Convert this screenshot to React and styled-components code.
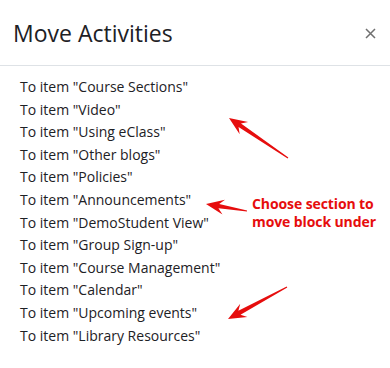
import React from 'react'
import { styled, createGlobalStyle } from 'styled-components';

const sections = [
    'Course Sections',
    'Video',
    'Using eClass',
    'Other blogs',
    'Policies',
    'Announcements',
    'DemoStudent View',
    'Group Sign-up',
    'Course Management',
    'Calendar',
    'Upcoming events',
    'Library Resources',
];

// red annotation arrows: tail -> tip
const arrows = [
    { x1: 288, y1: 158, x2: 229, y2: 118 },
    { x1: 247, y1: 211, x2: 206, y2: 204 },
    { x1: 287, y1: 287, x2: 228, y2: 319 },
];

function Arrow({ x1, y1, x2, y2 }) {
    const dx = x2 - x1;
    const dy = y2 - y1;
    const L = Math.sqrt(dx * dx + dy * dy);
    const angle = (Math.atan2(dy, dx) * 180) / Math.PI;
    const pts = [
        [0, -0.6],
        [L - 13, -2.2],
        [L - 18, -7.5],
        [L, 0],
        [L - 18, 7.5],
        [L - 13, 2.2],
        [0, 0.6],
    ].map((p) => p.join(',')).join(' ');
    return (
        <polygon
            points={pts}
            fill="#e60d0d"
            transform={`translate(${x1} ${y1}) rotate(${angle})`}
        />
    );
}

export default function App() {
    return (
        <>
            <GlobalStyle />
            <Modal>
                <Header>
                    <Title>Move Activities</Title>
                    <CloseButton type="button" aria-label="Close">
                        <svg width="11" height="11" viewBox="0 0 11 11">
                            <path d="M1 1L10 10M10 1L1 10" stroke="#6f6f6f" strokeWidth="1.5" />
                        </svg>
                    </CloseButton>
                </Header>
                <Body>
                    <ItemList>
                        {sections.map((name) => (
                            <Item key={name}>To item "{name}"</Item>
                        ))}
                    </ItemList>
                </Body>
                <Overlay width="390" height="368" viewBox="0 0 390 368">
                    {arrows.map((a, i) => (
                        <Arrow key={i} {...a} />
                    ))}
                </Overlay>
                <Note>
                    <NoteLine>Choose section to</NoteLine>
                    <NoteLine>move block under</NoteLine>
                </Note>
            </Modal>
        </>
    );
}

const GlobalStyle = createGlobalStyle`
    html, body {
        margin: 0;
        padding: 0;
        background: #fff;
    }
    body {
        font-family: "Open Sans", "Noto Sans", sans-serif;
    }
`

const Modal = styled.div`
    position: relative;
    width: 390px;
    height: 368px;
    background: #fff;
    overflow: hidden;
`

const Header = styled.div`
    display: flex;
    align-items: center;
    justify-content: space-between;
    height: 66px;
    padding: 0 12px 0 13px;
    box-sizing: border-box;
    border-bottom: 1px solid #dee2e6;
`

const Title = styled.h5`
    margin: 0;
    font-size: 23px;
    font-weight: 400;
    color: #1d2125;
`

const CloseButton = styled.button`
    display: flex;
    align-items: center;
    justify-content: center;
    width: 16px;
    height: 16px;
    padding: 0;
    border: none;
    background: none;
    margin-top: 2px;
`

const Body = styled.div`
    padding: 10px 20px 0;
`

const ItemList = styled.ul`
    list-style: none;
    margin: 0;
    padding: 0;
`

const Item = styled.li`
    font-size: 14px;
    line-height: 22.6px;
    color: #1d2125;
    white-space: nowrap;
`

const Overlay = styled.svg`
    position: absolute;
    left: 0;
    top: 0;
    pointer-events: none;
`

const Note = styled.div`
    position: absolute;
    left: 252px;
    top: 195px;
    display: flex;
    flex-direction: column;
    gap: 0;
    color: #e60d0d;
`

const NoteLine = styled.span`
    font-size: 14px;
    font-weight: 700;
    line-height: 17.5px;
    letter-spacing: -0.1px;
`
